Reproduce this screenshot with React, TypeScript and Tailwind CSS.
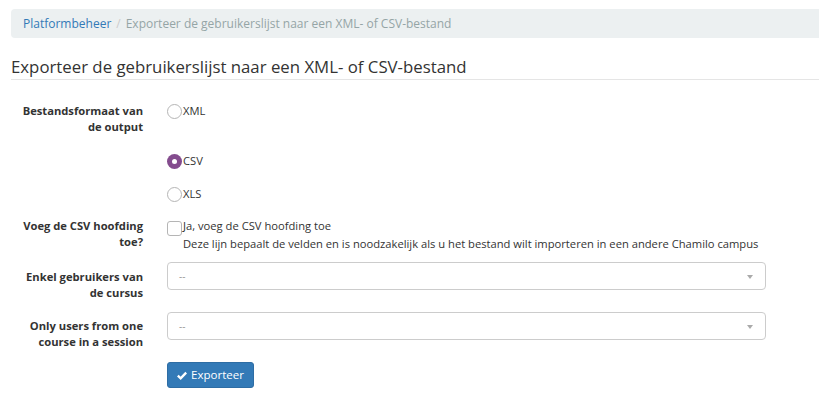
import { useState } from "react";

const font = { fontFamily: '"Open Sans", "Noto Sans", sans-serif' };

function Radio({ checked, label }: { checked?: boolean; label: string }) {
  return (
    <div className="flex items-center h-[16px]">
      {checked ? (
        <span className="w-[15px] h-[15px] rounded-full bg-[#844c8e] flex items-center justify-center">
          <span className="w-[5px] h-[5px] rounded-full bg-white" />
        </span>
      ) : (
        <span className="w-[15px] h-[15px] rounded-full border border-[#b5b5b5] bg-white" />
      )}
      <span className="ml-[1px] text-[11.2px] text-[#333]">{label}</span>
    </div>
  );
}

function Select() {
  return (
    <div className="relative w-[599px] h-[28px] border border-[#ccc] rounded-[4px] bg-white flex items-center pl-[11px]">
      <span className="text-[10px] text-[#999]">--</span>
      <span className="absolute right-[12px] top-[12px] w-0 h-0 border-l-[3px] border-r-[3px] border-t-[4px] border-l-transparent border-r-transparent border-t-[#aaa]" />
    </div>
  );
}

function Label({ lines }: { lines: string[] }) {
  return (
    <div className="w-[156px] shrink-0 pr-[24px] text-right text-[11.2px] font-bold text-[#333] leading-[16px]">
      {lines.map((l) => (
        <div key={l}>{l}</div>
      ))}
    </div>
  );
}

export default function App() {
  const [format] = useState("csv");
  return (
    <div className="w-[819px] h-[406px] bg-white pl-[11px] pt-[9px] overflow-hidden" style={font}>
      <div className="h-[29px] bg-[#ecf0f1] rounded-l-[4px] flex items-center pl-[12px] text-[12px]">
        <span className="text-[#337ab7]">Platformbeheer</span>
        <span className="text-[#ccc] px-[5px]">/</span>
        <span className="text-[#95a5a6]">Exporteer de gebruikerslijst naar een XML- of CSV-bestand</span>
      </div>

      <div className="mt-[17px] border-b border-[#e5e5e5]">
        <h1 className="text-[16.8px] leading-[24px] text-[#333]">
          Exporteer de gebruikerslijst naar een XML- of CSV-bestand
        </h1>
      </div>

      <div className="mt-[23px] flex">
        <Label lines={["Bestandsformaat van", "de output"]} />
        <div className="flex flex-col">
          <Radio label="XML" checked={format === "xml"} />
          <div className="mt-[34px]">
            <Radio label="CSV" checked={format === "csv"} />
          </div>
          <div className="mt-[17px]">
            <Radio label="XLS" checked={format === "xls"} />
          </div>
        </div>
      </div>

      <div className="mt-[16px] flex">
        <Label lines={["Voeg de CSV hoofding", "toe?"]} />
        <div className="flex flex-col text-[11.2px] text-[#333] leading-[15px]">
          <div className="flex items-start">
            <span className="w-[15px] h-[15px] border border-[#b5b5b5] rounded-[3px] bg-white mt-[3px]" />
            <span className="ml-[1px]">Ja, voeg de CSV hoofding toe</span>
          </div>
          <div className="pl-[16px]">
            Deze lijn bepaalt de velden en is noodzakelijk als u het bestand wilt importeren in een andere Chamilo campus
          </div>
        </div>
      </div>

      <div className="mt-[11px] flex items-start">
        <div className="pt-[7px]">
          <Label lines={["Enkel gebruikers van", "de cursus"]} />
        </div>
        <Select />
      </div>

      <div className="mt-[11px] flex items-start">
        <div className="pt-[6px]">
          <Label lines={["Only users from one", "course in a session"]} />
        </div>
        <Select />
      </div>

      <div className="mt-[12px] pl-[156px]">
        <button className="h-[26px] w-[87px] bg-[#337ab7] border border-[#2e6da4] rounded-[3px] text-white text-[11.5px] flex items-center justify-center gap-[4px]">
          <svg width="10" height="9" viewBox="0 0 12 10">
            <path d="M1 5.2 L4.4 8.4 L11 1.6" stroke="white" strokeWidth="2.8" fill="none" strokeLinejoin="miter" />
          </svg>
          Exporteer
        </button>
      </div>
    </div>
  );
}
